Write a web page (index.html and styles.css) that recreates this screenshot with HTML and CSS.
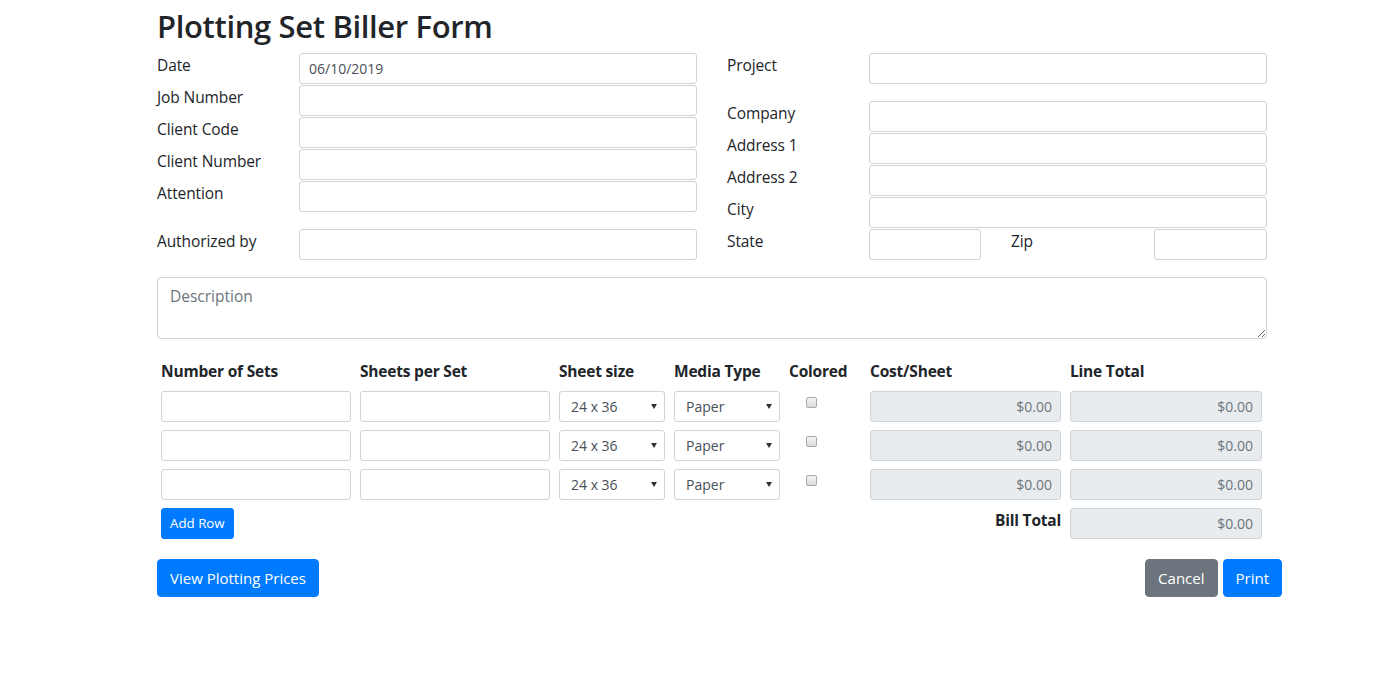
FILE: index.html
```html
<!DOCTYPE html>
<html lang="en">
<head>
<meta charset="utf-8">
<title>Plotting Set Biller Form</title>
<link rel="stylesheet" href="styles.css">
</head>
<body>
<div class="page">
  <h2 class="title">Plotting Set Biller Form</h2>

  <div class="top">
    <div class="col">
      <div class="frow"><label class="lbl">Date</label><input class="fc fc-date" type="text" value="06/10/2019"></div>
      <div class="frow"><label class="lbl">Job Number</label><input class="fc" type="text"></div>
      <div class="frow"><label class="lbl">Client Code</label><input class="fc" type="text"></div>
      <div class="frow"><label class="lbl">Client Number</label><input class="fc" type="text"></div>
      <div class="frow frow-gap"><label class="lbl">Attention</label><input class="fc" type="text"></div>
      <div class="frow"><label class="lbl">Authorized by</label><input class="fc" type="text"></div>
    </div>
    <div class="col">
      <div class="frow frow-gap"><label class="lbl">Project</label><input class="fc" type="text"></div>
      <div class="frow"><label class="lbl">Company</label><input class="fc" type="text"></div>
      <div class="frow"><label class="lbl">Address 1</label><input class="fc" type="text"></div>
      <div class="frow"><label class="lbl">Address 2</label><input class="fc" type="text"></div>
      <div class="frow"><label class="lbl">City</label><input class="fc" type="text"></div>
      <div class="frow">
        <label class="lbl">State</label>
        <div class="statezip">
          <input class="fc" type="text">
          <label class="lbl">Zip</label>
          <input class="fc" type="text">
        </div>
      </div>
    </div>
  </div>

  <textarea class="desc" rows="2" placeholder="Description"></textarea>

  <div class="items">
    <div class="th">Number of Sets</div>
    <div class="th">Sheets per Set</div>
    <div class="th">Sheet size</div>
    <div class="th">Media Type</div>
    <div class="th">Colored</div>
    <div class="th">Cost/Sheet</div>
    <div class="th">Line Total</div>

    <input class="fc" type="text">
    <input class="fc" type="text">
    <div class="sel"><select class="fc fc-sel"><option>24 x 36</option></select></div>
    <div class="sel"><select class="fc fc-sel"><option>Paper</option></select></div>
    <div class="chk-cell"><input class="chk" type="checkbox"></div>
    <input class="fc fc-ro" type="text" readonly placeholder="$0.00">
    <input class="fc fc-ro" type="text" readonly placeholder="$0.00">

    <input class="fc" type="text">
    <input class="fc" type="text">
    <div class="sel"><select class="fc fc-sel"><option>24 x 36</option></select></div>
    <div class="sel"><select class="fc fc-sel"><option>Paper</option></select></div>
    <div class="chk-cell"><input class="chk" type="checkbox"></div>
    <input class="fc fc-ro" type="text" readonly placeholder="$0.00">
    <input class="fc fc-ro" type="text" readonly placeholder="$0.00">

    <input class="fc" type="text">
    <input class="fc" type="text">
    <div class="sel"><select class="fc fc-sel"><option>24 x 36</option></select></div>
    <div class="sel"><select class="fc fc-sel"><option>Paper</option></select></div>
    <div class="chk-cell"><input class="chk" type="checkbox"></div>
    <input class="fc fc-ro" type="text" readonly placeholder="$0.00">
    <input class="fc fc-ro" type="text" readonly placeholder="$0.00">

    <div class="addcell"><button class="btn btn-sm btn-primary" type="button">Add Row</button></div>
    <div class="billlbl">Bill Total</div>
    <input class="fc fc-ro" type="text" readonly placeholder="$0.00">
  </div>

  <div class="actions">
    <button class="btn btn-primary" type="button">View Plotting Prices</button>
    <div class="actions-right">
      <button class="btn btn-secondary" type="button">Cancel</button>
      <button class="btn btn-primary" type="button">Print</button>
    </div>
  </div>
</div>
</body>
</html>
```

FILE: styles.css
```css
* { box-sizing: border-box; }

html, body {
  margin: 0;
  padding: 0;
  background: #fff;
}

body {
  font-family: "Open Sans", "Noto Sans", "Liberation Sans", sans-serif;
  font-size: 16px;
  line-height: 24px;
  color: #212529;
}

.page {
  margin-left: 157px;
  width: 1110px;
}

.title {
  margin: 7px 0 8px;
  font-size: 31px;
  line-height: 38px;
  font-weight: 600;
  letter-spacing: -0.35px;
  color: #212529;
}

.top {
  display: grid;
  grid-template-columns: 540px 540px;
  column-gap: 30px;
}

.frow {
  display: grid;
  grid-template-columns: 142px 1fr;
  height: 32px;
  align-items: start;
}

.frow-gap { margin-bottom: 16px; }

.lbl {
  font-size: 15.5px;
  line-height: 24px;
  letter-spacing: -0.1px;
}

.fc {
  display: block;
  width: 100%;
  height: 31px;
  margin: 0;
  padding: 0 8px;
  font-family: inherit;
  font-size: 14px;
  color: #495057;
  background: #fff;
  border: 1px solid #ced4da;
  border-radius: 3px;
  outline: none;
}

.fc-date { padding-left: 9px; }

.fc::placeholder { color: #6c757d; opacity: 1; }

.statezip {
  display: grid;
  grid-template-columns: 112px 30px 143px 113px;
}
.statezip .lbl { grid-column: 3; }
.statezip .fc:first-child { grid-column: 1; }
.statezip .fc:last-child { grid-column: 4; }

.desc {
  display: block;
  width: 1110px;
  height: 62px;
  margin: 16px 0 0;
  padding: 6px 12px;
  font-family: inherit;
  font-size: 15.5px;
  line-height: 24px;
  color: #495057;
  border: 1px solid #ced4da;
  border-radius: 4px;
  outline: none;
}
.desc::placeholder { color: #6c757d; opacity: 1; }

.items {
  display: grid;
  grid-template-columns: 190px 190px 106px 106px 72px 191px 192px;
  column-gap: 9px;
  row-gap: 8px;
  margin: 16px 4px 0;
  padding: 4px 0;
}

.th {
  font-weight: 700;
  font-size: 15.5px;
  line-height: 24px;
  letter-spacing: -0.2px;
  white-space: nowrap;
}

.sel { position: relative; }
.sel::after {
  content: "";
  position: absolute;
  right: 8px;
  top: 13px;
  border-left: 3px solid transparent;
  border-right: 3px solid transparent;
  border-top: 5px solid #333;
}

.fc-sel {
  -webkit-appearance: none;
  appearance: none;
  padding-left: 11px;
  padding-right: 18px;
  font-size: 14px;
}

.chk-cell { padding: 6px 0 0 17px; }

.chk {
  -webkit-appearance: none;
  appearance: none;
  display: block;
  width: 11px;
  height: 11px;
  margin: 0;
  border: 1px solid #a9a9a9;
  border-radius: 2px;
  background: linear-gradient(#f4f4f4, #dcdcdc);
}

.fc-ro {
  background: #e9ecef;
  text-align: right;
}

.addcell { grid-column: 1; }

.billlbl {
  grid-column: 6;
  text-align: right;
  font-weight: 700;
  font-size: 15.5px;
  line-height: 24px;
  letter-spacing: -0.2px;
}

.btn {
  display: inline-block;
  font-family: inherit;
  border: 1px solid transparent;
  color: #fff;
  cursor: pointer;
  height: 38px;
  padding: 0 12px;
  font-size: 15px;
  line-height: 24px;
  border-radius: 4px;
}

.btn-sm {
  height: 31px;
  padding: 0 8px;
  font-size: 13.3px;
  line-height: 21px;
  border-radius: 3px;
}

.btn-primary { background: #007bff; border-color: #007bff; }
.btn-secondary { background: #6c757d; border-color: #6c757d; }

.actions {
  display: flex;
  justify-content: space-between;
  margin: 16px -15px 0 0;
}

.actions-right {
  display: flex;
  gap: 5px;
}
```
